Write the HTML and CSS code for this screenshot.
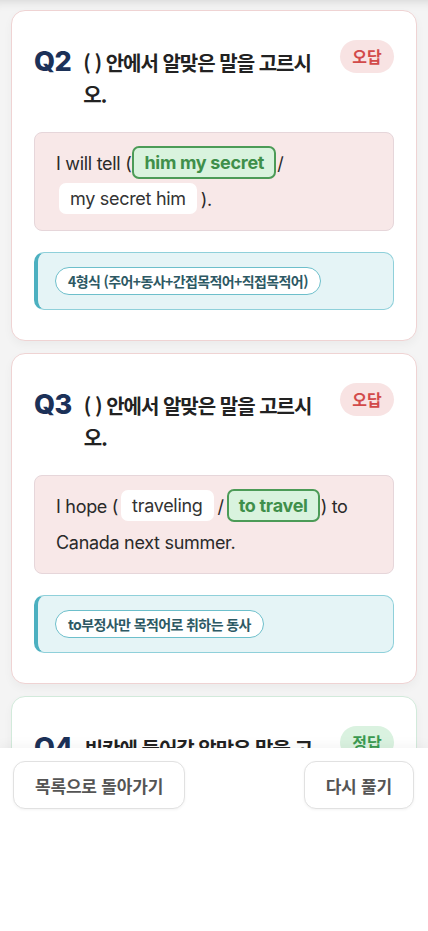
FILE: index.html
```html
<!DOCTYPE html>
<html lang="ko">
<head>
    <meta charset="UTF-8">
    <title>오답 노트</title>
    <link rel="stylesheet" href="styles.css">
</head>
<body>
<div class="page">
    <div class="list">
        <div class="card wrong">
            <div class="q-head">
                <span class="q-num">Q2</span>
                <p class="q-text">( ) 안에서 알맞은 말을 고르시오.</p>
                <span class="badge bad">오답</span>
            </div>
            <div class="sentence">
                I will tell (<span class="chip ok first">him my secret</span>/
                <span class="chip">my secret him</span>).
            </div>
            <div class="hint">
                <span class="hint-tag">4형식 (주어+동사+간접목적어+직접목적어)</span>
            </div>
        </div>

        <div class="card wrong">
            <div class="q-head">
                <span class="q-num">Q3</span>
                <p class="q-text">( ) 안에서 알맞은 말을 고르시오.</p>
                <span class="badge bad">오답</span>
            </div>
            <div class="sentence">
                I hope (<span class="chip">traveling</span>/<span class="chip ok">to travel</span>) to Canada next summer.
            </div>
            <div class="hint">
                <span class="hint-tag">to부정사만 목적어로 취하는 동사</span>
            </div>
        </div>

        <div class="card right">
            <div class="q-head">
                <span class="q-num">Q4</span>
                <p class="q-text">빈칸에 들어갈 알맞은 말을 고르시오.</p>
                <span class="badge good">정답</span>
            </div>
        </div>
    </div>

    <div class="footer">
        <button class="btn">목록으로 돌아가기</button>
        <button class="btn">다시 풀기</button>
    </div>
</div>
</body>
</html>
```

FILE: styles.css
```css
* {
    margin: 0;
    padding: 0;
    box-sizing: border-box;
}

body {
    background: #fff;
    font-family: Inter, "Noto Sans CJK KR", sans-serif;
    color: #222;
}

.page {
    width: 428px;
    height: 931px;
    display: flex;
    flex-direction: column;
}

.list {
    height: 748px;
    overflow: hidden;
    background: #f4f4f4;
    padding: 10px 11px 0;
    display: flex;
    flex-direction: column;
    gap: 12px;
    box-shadow: inset 0 12px 12px -12px rgba(0, 0, 0, .16);
}

.card {
    flex-shrink: 0;
    background: #fff;
    border: 1px solid #efd3d3;
    border-radius: 14px;
    padding: 29px 22px 30px;
    box-shadow: 0 4px 10px rgba(0, 0, 0, .04);
}

.card.right {
    border-color: #d2eadb;
    height: 120px;
}

.q-head {
    display: flex;
    align-items: flex-start;
    gap: 12px;
}

.q-num {
    margin-top: 6px;
    font-family: Inter, sans-serif;
    font-size: 27px;
    line-height: 32px;
    font-weight: 800;
    color: #1c3158;
    letter-spacing: -0.5px;
}

.q-text {
    flex: 1;
    margin-top: 7px;
    padding-right: 8px;
    font-family: "Noto Sans CJK KR", sans-serif;
    font-size: 20px;
    line-height: 32px;
    font-weight: 700;
    color: #222;
    letter-spacing: -1px;
}

.badge {
    flex-shrink: 0;
    width: 54px;
    height: 33px;
    line-height: 33px;
    border-radius: 17px;
    text-align: center;
    font-family: "Noto Sans CJK KR", sans-serif;
    font-size: 16px;
    font-weight: 700;
}

.badge.bad {
    background: #f8e3e3;
    color: #d24a4a;
}

.badge.good {
    background: #daf2e0;
    color: #3b9a50;
}

.sentence {
    margin-top: 21px;
    background: #f8e8e8;
    border: 1px solid #e6d6da;
    border-radius: 8px;
    padding: 13px 21px 12px;
    font-size: 18px;
    line-height: 36px;
    letter-spacing: -0.3px;
    color: #2a2a2a;
}

.chip {
    display: inline-block;
    height: 31px;
    line-height: 29px;
    padding: 0 10px;
    margin: 0 4px 0 3px;
    border: 1px solid transparent;
    border-radius: 7px;
    background: #fff;
    color: #333;
    vertical-align: 1px;
}

.chip.first {
    margin-left: 1px;
}

.chip.ok {
    height: 33px;
    line-height: 29px;
    border: 2px solid #4c9b57;
    background: #d9f3de;
    color: #3f8f4a;
    font-weight: 700;
    margin-right: 1px;
}

.hint {
    margin-top: 21px;
    background: #e5f4f6;
    border: 1px solid #8fd0da;
    border-left: 4px solid #4cb0c0;
    border-radius: 10px;
    padding: 14px 17px;
}

.hint-tag {
    display: inline-block;
    height: 28px;
    line-height: 26px;
    padding: 0 12px;
    border: 1px solid #6dbfcb;
    border-radius: 14px;
    background: #fff;
    font-family: "Noto Sans CJK KR", sans-serif;
    font-size: 14px;
    font-weight: 700;
    color: #2d5964;
    letter-spacing: -0.6px;
}

.footer {
    flex: 1;
    background: #fff;
    display: flex;
    justify-content: space-between;
    align-items: flex-start;
    padding: 13px 14px 0 13px;
    box-shadow: 0 -4px 10px rgba(0, 0, 0, .04);
    position: relative;
}

.btn {
    height: 48px;
    padding: 0 21px;
    border: 1px solid #e1e1e1;
    border-radius: 12px;
    background: #fff;
    font-family: "Noto Sans CJK KR", sans-serif;
    font-size: 17px;
    font-weight: 700;
    color: #555;
    letter-spacing: -0.2px;
    box-shadow: 0 1px 3px rgba(0, 0, 0, .05);
}
```
